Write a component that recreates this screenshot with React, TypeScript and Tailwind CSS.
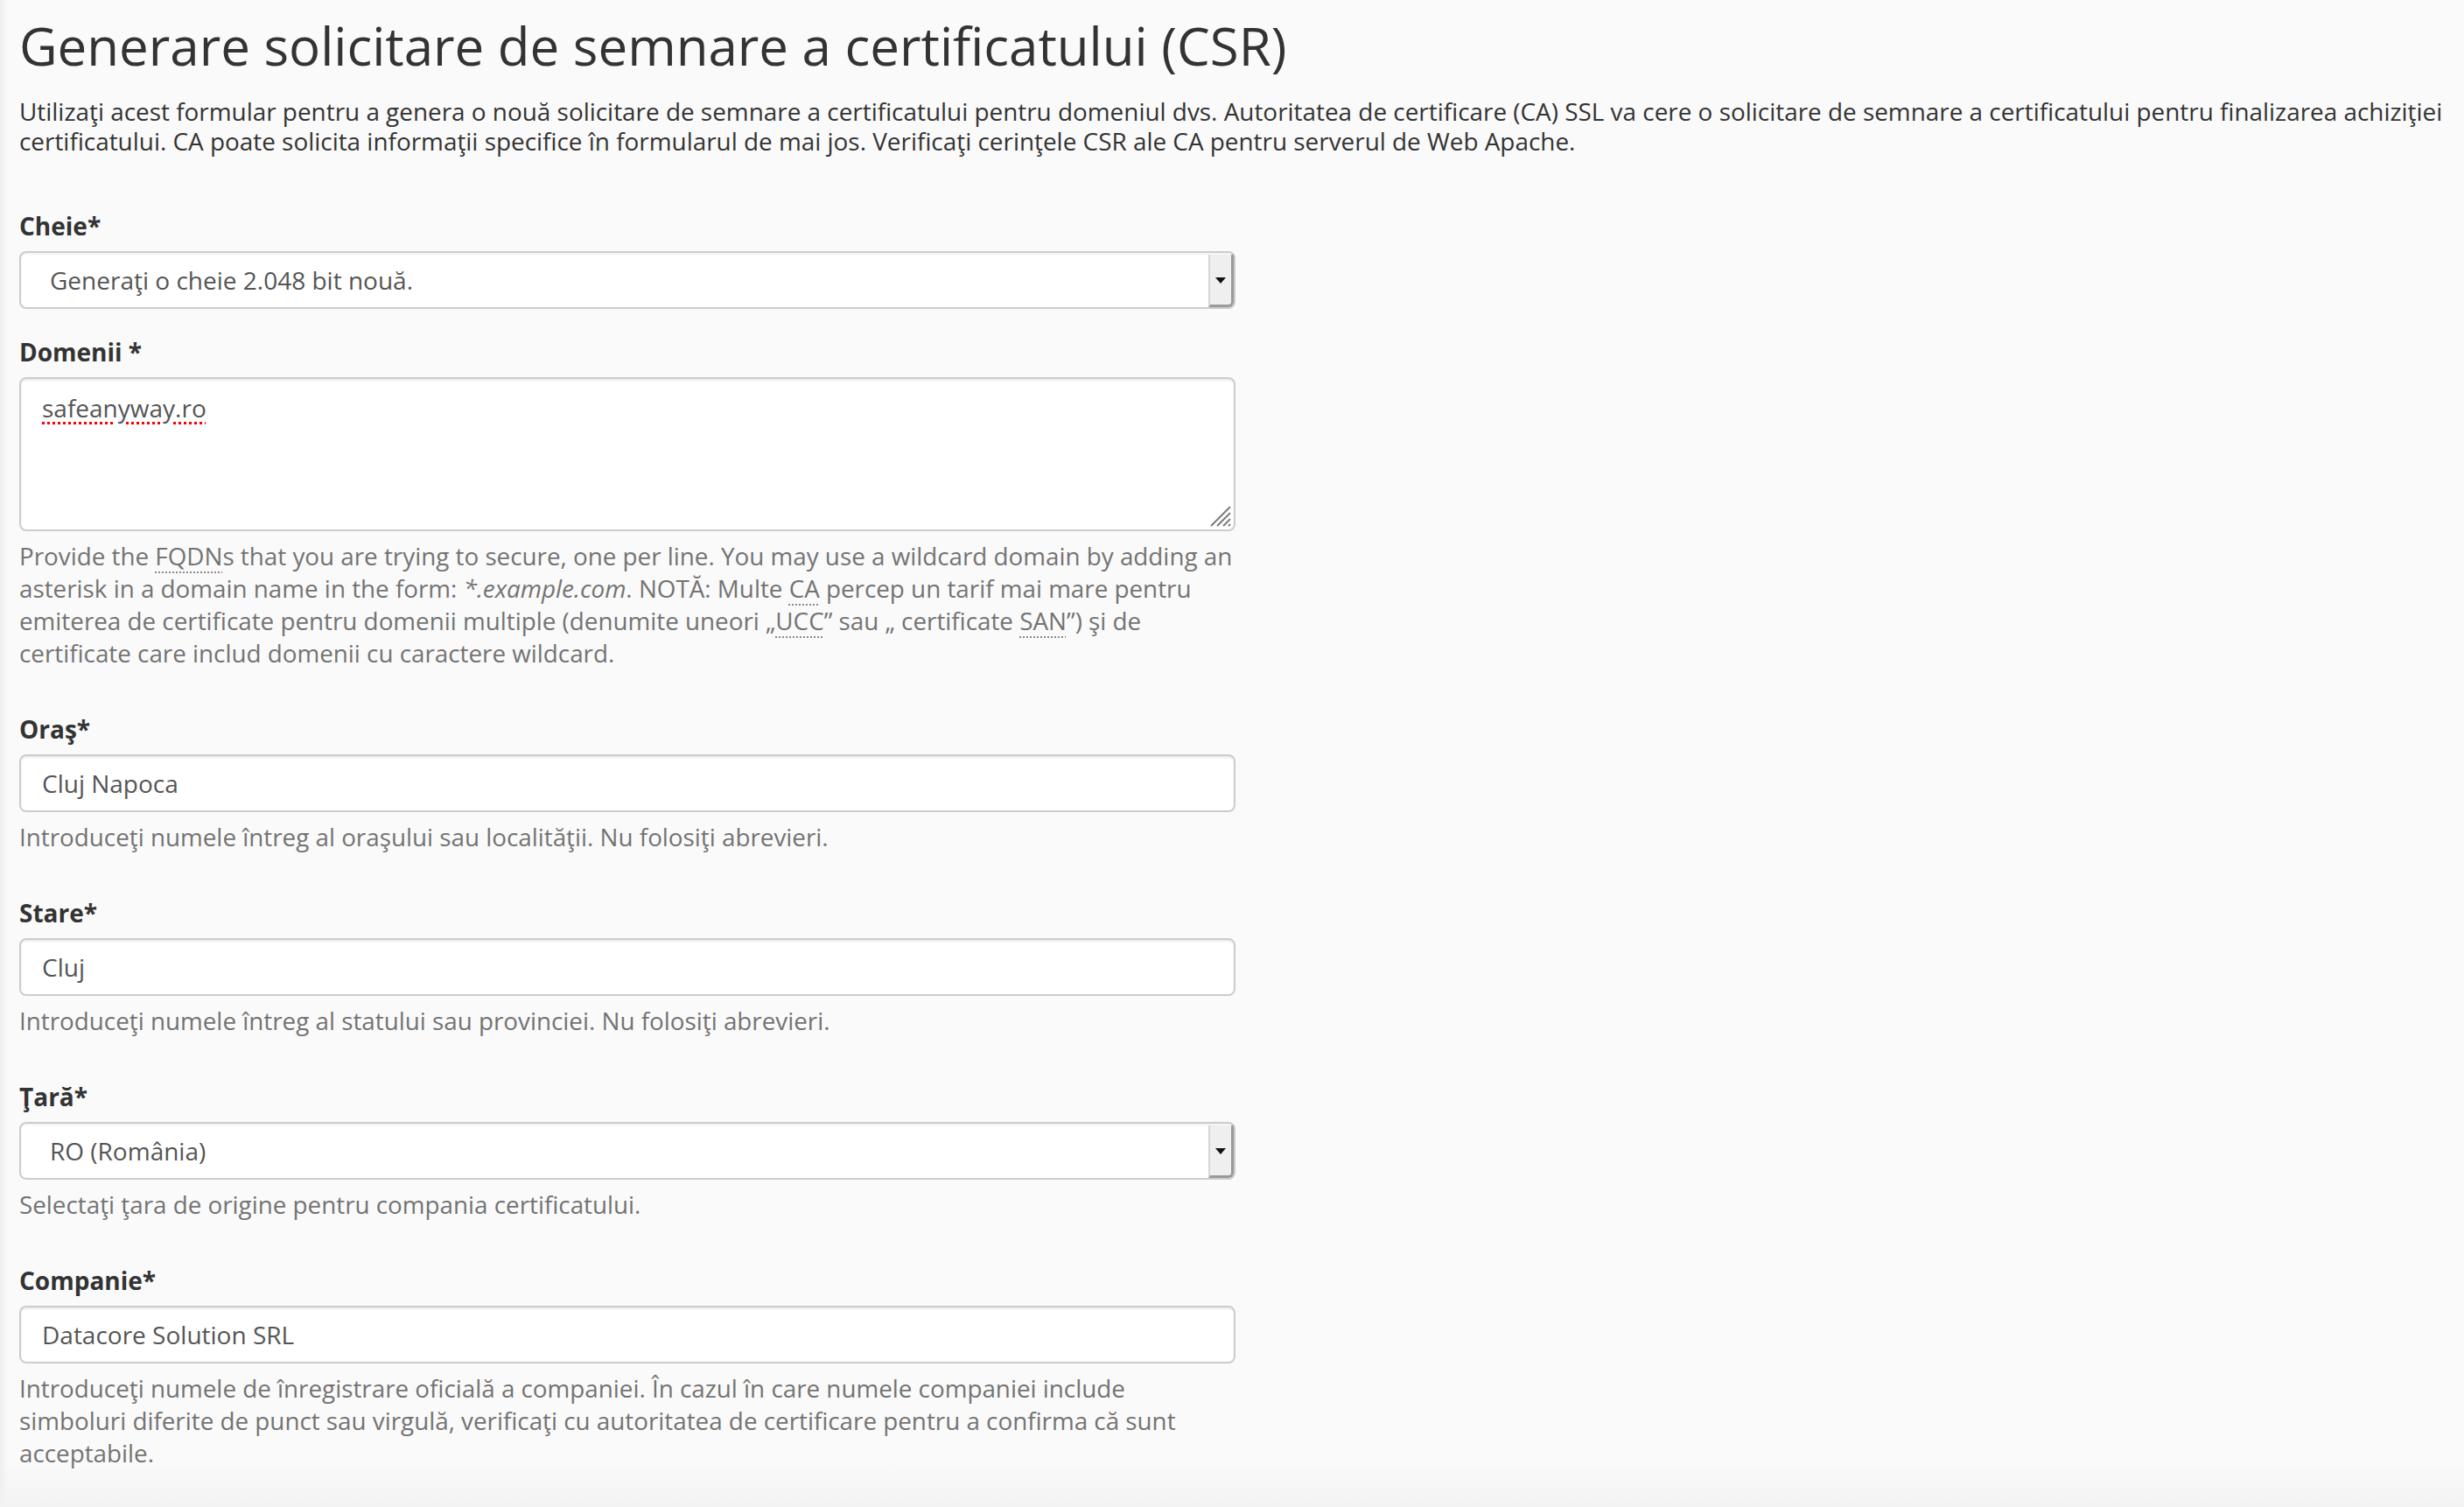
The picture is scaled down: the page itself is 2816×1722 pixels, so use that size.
import React from "react";

const Abbr = ({ children }: { children: React.ReactNode }) => (
  <span className="underline decoration-dotted decoration-[#8a8a8a] decoration-[2px] underline-offset-[7px]">
    {children}
  </span>
);

const Label = ({ children }: { children: React.ReactNode }) => (
  <div className="text-[28px] leading-[40px] font-bold text-[#333] mb-[9px]">{children}</div>
);

const Help = ({ children }: { children: React.ReactNode }) => (
  <div className="mt-[10px] text-[27.8px] leading-[37px] text-[#737373]">{children}</div>
);

const Input = ({ value }: { value: string }) => (
  <div className="h-[66px] w-full flex items-center bg-white border-2 border-[#cccccc] rounded-[8px] pl-[24px] text-[28px] leading-[40px] text-[#555] shadow-[inset_0_2px_2px_rgba(0,0,0,0.075)]">
    {value}
  </div>
);

const Select = ({ value }: { value: string }) => (
  <div className="h-[66px] w-full flex bg-white border-2 border-[#cccccc] rounded-[8px] shadow-[inset_0_2px_2px_rgba(0,0,0,0.05)]">
    <div className="flex-1 flex items-center pl-[33px] text-[28px] leading-[40px] text-[#555]">{value}</div>
    <div className="w-[29px] mt-[2px] flex items-center justify-center bg-[#efefef] border-l-2 border-l-[#d6d6d6] border-r-[3px] border-r-[#9a9a9a] border-b-[3px] border-b-[#9a9a9a] rounded-br-[6px]">
      <svg width="12" height="7" viewBox="0 0 12 7" className="mt-[1px]">
        <polygon points="0,0 12,0 6,7" fill="#111" />
      </svg>
    </div>
  </div>
);

export default function App() {
  return (
    <div className="min-h-[1722px] w-full font-['Open_Sans',sans-serif] bg-[#fafafa] bg-[linear-gradient(to_bottom,rgba(250,250,250,0)_1670px,#f3f3f3_1722px),linear-gradient(to_right,#ededed,#fafafa_9px)] px-[22px] pt-[18px]">
      <h1 className="text-[60px] leading-[68px] font-normal text-[#333] whitespace-nowrap">
        Generare solicitare de semnare a certificatului (CSR)
      </h1>
      <p className="mt-[24px] text-[27.9px] leading-[34px] text-[#333]">
        Utilizaţi acest formular pentru a genera o nouă solicitare de semnare a certificatului pentru domeniul dvs.
        Autoritatea de certificare (CA) SSL va cere o solicitare de semnare a certificatului pentru finalizarea
        achiziţiei certificatului. CA poate solicita informaţii specifice în formularul de mai jos. Verificaţi
        cerinţele CSR ale CA pentru serverul de Web Apache.
      </p>

      <div className="w-[1390px] mt-[60px]">
        <div className="mb-[29px]">
          <Label>Cheie*</Label>
          <Select value="Generaţi o cheie 2.048 bit nouă." />
        </div>

        <div className="mb-[48px]">
          <Label>Domenii *</Label>
          <div className="relative h-[176px] w-full bg-white border-2 border-[#cccccc] rounded-[8px] pl-[24px] pt-[13px] text-[28px] leading-[40px] text-[#555] shadow-[inset_0_2px_2px_rgba(0,0,0,0.075)]">
            <span className="underline decoration-dotted decoration-[#ff0000] decoration-[3px] underline-offset-[5px]">
              safeanyway.ro
            </span>
            <svg
              width="26"
              height="26"
              viewBox="0 0 26 26"
              className="absolute right-[2px] bottom-[2px]"
            >
              <line x1="2" y1="24" x2="24" y2="2" stroke="#7a7a7a" strokeWidth="2" />
              <line x1="9" y1="24" x2="24" y2="9" stroke="#7a7a7a" strokeWidth="2" />
              <line x1="16" y1="24" x2="24" y2="16" stroke="#7a7a7a" strokeWidth="2" />
              <line x1="22" y1="24" x2="24" y2="22" stroke="#7a7a7a" strokeWidth="2" />
            </svg>
          </div>
          <Help>
            Provide the <Abbr>FQDN</Abbr>s that you are trying to secure, one per line. You may use a wildcard domain by
            adding an asterisk in a domain name in the form: <em>*.example.com</em>. NOTĂ: Multe <Abbr>CA</Abbr> percep
            un tarif mai mare pentru emiterea de certificate pentru domenii multiple (denumite uneori „<Abbr>UCC</Abbr>”
            sau „ certificate <Abbr>SAN</Abbr>”) şi de certificate care includ domenii cu caractere wildcard.
          </Help>
        </div>

        <div className="mb-[48px]">
          <Label>Oraş*</Label>
          <Input value="Cluj Napoca" />
          <Help>Introduceţi numele întreg al oraşului sau localităţii. Nu folosiţi abrevieri.</Help>
        </div>

        <div className="mb-[48px]">
          <Label>Stare*</Label>
          <Input value="Cluj" />
          <Help>Introduceţi numele întreg al statului sau provinciei. Nu folosiţi abrevieri.</Help>
        </div>

        <div className="mb-[48px]">
          <Label>Ţară*</Label>
          <Select value="RO (România)" />
          <Help>Selectaţi ţara de origine pentru compania certificatului.</Help>
        </div>

        <div>
          <Label>Companie*</Label>
          <Input value="Datacore Solution SRL" />
          <Help>
            Introduceţi numele de înregistrare oficială a companiei. În cazul în care numele companiei include simboluri
            diferite de punct sau virgulă, verificaţi cu autoritatea de certificare pentru a confirma că sunt
            acceptabile.
          </Help>
        </div>
      </div>
    </div>
  );
}
